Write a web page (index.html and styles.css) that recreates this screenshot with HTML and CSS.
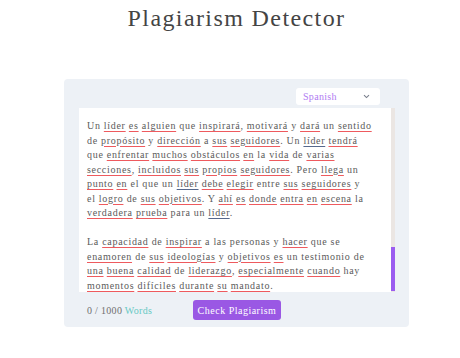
FILE: index.html
```html
<!DOCTYPE html>
<html lang="es">
<head>
    <meta charset="UTF-8">
    <title>Plagiarism Detector</title>
    <link rel="stylesheet" href="styles.css">
</head>
<body>
    <div class="page">
        <h1 class="title">Plagiarism Detector</h1>

        <div class="panel">
            <!-- idioma -->
            <div class="lang-row">
                <div class="lang-select">
                    <span>Spanish</span>
                    <svg width="7" height="5" viewBox="0 0 7 5"><path d="M1 1.2 L3.5 3.6 L6 1.2" fill="none" stroke="#7a7f8c" stroke-width="1.1"/></svg>
                </div>
            </div>

            <!-- texto -->
            <div class="editor">
                <div class="editor-text">
                    <p>Un <u>líder</u> <u>es</u> <u>alguien</u> que <u>inspirará</u>, <u>motivará</u> y <u>dará</u> un <u>sentido</u><br>
                    de <u>propósito</u> y <u>dirección</u> a <u>sus</u> <u>seguidores</u>. Un <u class="alt">líder</u> <u>tendrá</u><br>
                    que <u>enfrentar</u> <u>muchos</u> <u>obstáculos</u> <u>en</u> la <u>vida</u> de <u>varias</u><br>
                    <u>secciones</u>, <u>incluidos</u> <u>sus</u> <u>propios</u> <u>seguidores</u>. Pero <u>llega</u> un<br>
                    <u>punto</u> <u>en</u> el que un <u class="alt">líder</u> <u>debe</u> <u>elegir</u> entre <u>sus</u> <u>seguidores</u> y<br>
                    el <u>logro</u> de <u>sus</u> <u>objetivos</u>. Y <u>ahí</u> <u>es</u> <u>donde</u> <u>entra</u> <u>en</u> <u>escena</u> la<br>
                    <u>verdadera</u> <u>prueba</u> para un <u class="alt">líder</u>.</p>
                    <p>La <u>capacidad</u> de <u>inspirar</u> a las personas y <u>hacer</u> que se<br>
                    <u>enamoren</u> de <u>sus</u> <u>ideologías</u> y <u>objetivos</u> <u>es</u> un testimonio de<br>
                    <u>una</u> <u>buena</u> <u>calidad</u> de <u>liderazgo</u>, <u>especialmente</u> <u>cuando</u> hay<br>
                    <u>momentos</u> <u>difíciles</u> <u>durante</u> <u>su</u> <u>mandato</u>.</p>
                </div>
                <div class="scrollbar">
                    <div class="thumb"></div>
                </div>
            </div>

            <!-- pie -->
            <div class="footer">
                <div class="count">0 / 1000 <span class="words">Words</span></div>
                <button class="check-btn">Check Plagiarism</button>
                <div></div>
            </div>
        </div>
    </div>
</body>
</html>
```

FILE: styles.css
```css
/* base */
* {
    box-sizing: border-box;
    margin: 0;
    padding: 0;
}

body {
    background: #fff;
    font-family: 'Liberation Serif', 'Noto Sans CJK SC', serif;
    color: #555;
}

.page {
    padding-left: 13px;
}

.title {
    font-weight: normal;
    font-size: 24px;
    letter-spacing: 1.4px;
    line-height: 30px;
    padding-top: 3px;
    text-align: center;
    color: #444;
}

/* panel */
.panel {
    width: 345px;
    margin: 46px auto 0;
    background: #edf1f6;
    border-radius: 4px;
    padding: 9px 14px 0 15px;
}

.lang-row {
    display: flex;
    justify-content: flex-end;
    padding-right: 15px;
}

.lang-select {
    width: 84px;
    height: 17px;
    background: #fff;
    border-radius: 3px;
    display: flex;
    align-items: center;
    justify-content: space-between;
    padding: 0 10px 0 7px;
    font-size: 10px;
    letter-spacing: 0.3px;
    color: #b07cf2;
}

/* editor */
.editor {
    margin-top: 3px;
    height: 184px;
    background: #fff;
    display: flex;
    overflow: hidden;
}

.editor-text {
    flex: 1;
    padding: 11px 0 0 8px;
    font-size: 10px;
    letter-spacing: 0.7px;
    line-height: 14.5px;
    color: #5b5b5b;
}

.editor-text p {
    white-space: nowrap;
}

.editor-text p + p {
    margin-top: 14.5px;
}

.editor-text u {
    text-decoration: underline solid #ee5a5e;
    text-decoration-thickness: 1px;
    text-underline-offset: 2px;
}

.editor-text u.alt {
    text-decoration-color: #56688c;
}

.scrollbar {
    width: 4px;
    background: #ebe6e3;
    display: flex;
    flex-direction: column;
    justify-content: flex-end;
    padding-bottom: 1px;
}

.thumb {
    height: 44px;
    background: #9b5cf0;
}

/* footer */
.footer {
    display: grid;
    grid-template-columns: 1fr auto 1fr;
    align-items: center;
    padding: 8px 0 7px;
}

.count {
    padding-left: 8px;
    font-size: 10px;
    letter-spacing: 0.3px;
    color: #6f6f6f;
}

.words {
    color: #67c9c4;
}

.check-btn {
    height: 20px;
    padding: 0 5px;
    border: none;
    border-radius: 3px;
    background: #9a58e4;
    color: #fff;
    font-family: 'Liberation Serif', serif;
    font-size: 10px;
    letter-spacing: 0.5px;
}
```
